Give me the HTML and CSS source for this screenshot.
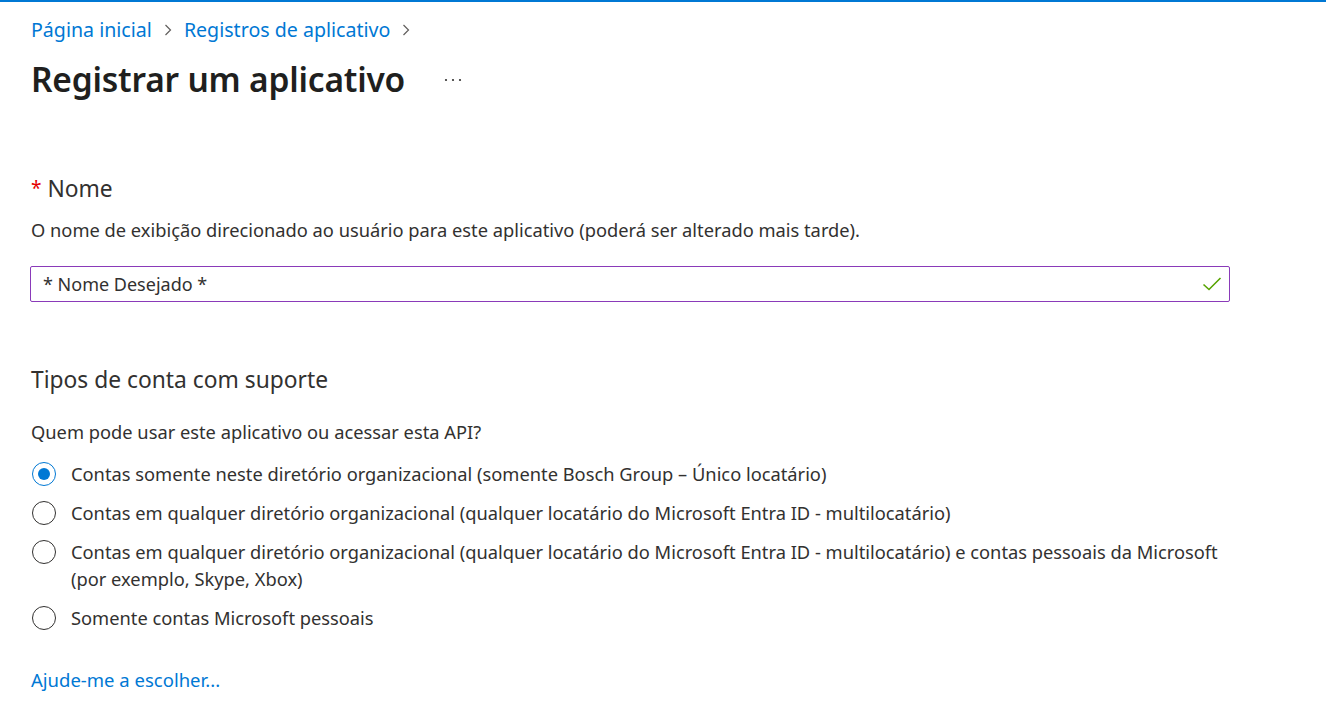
FILE: index.html
```html
<!DOCTYPE html>
<html lang="pt">
<head>
<meta charset="utf-8">
<link rel="stylesheet" href="styles.css">
</head>
<body>
<div class="topbar"></div>
<main class="page">
  <nav class="breadcrumb">
    <a class="crumb">Página inicial</a>
    <svg class="chev" width="10" height="16" viewBox="0 0 10 16"><path d="M2.5 3 L7.5 8 L2.5 13" fill="none" stroke="#605e5c" stroke-width="1.2"/></svg>
    <a class="crumb">Registros de aplicativo</a>
    <svg class="chev" width="10" height="16" viewBox="0 0 10 16"><path d="M2.5 3 L7.5 8 L2.5 13" fill="none" stroke="#605e5c" stroke-width="1.2"/></svg>
  </nav>
  <header class="title-row">
    <h1 class="title">Registrar um aplicativo</h1>
    <svg class="more" width="18" height="4" viewBox="0 0 18 4"><circle cx="2" cy="2" r="1.1" fill="#323130"/><circle cx="9" cy="2" r="1.1" fill="#323130"/><circle cx="16" cy="2" r="1.1" fill="#323130"/></svg>
  </header>

  <section class="section name-section">
    <h2 class="label"><span class="req">*</span> Nome</h2>
    <p class="desc">O nome de exibição direcionado ao usuário para este aplicativo (poderá ser alterado mais tarde).</p>
    <div class="input">
      <span class="input-text">* Nome Desejado *</span>
      <svg class="check" width="20" height="16" viewBox="0 0 20 16"><path d="M1.5 8.5 L7 13.5 L18.5 2" fill="none" stroke="#57a300" stroke-width="1.6"/></svg>
    </div>
  </section>

  <section class="section types-section">
    <h2 class="label">Tipos de conta com suporte</h2>
    <p class="question">Quem pode usar este aplicativo ou acessar esta API?</p>
    <div class="options">
      <div class="option">
        <span class="radio checked"></span>
        <span class="opt-text">Contas somente neste diretório organizacional (somente Bosch Group – Único locatário)</span>
      </div>
      <div class="option">
        <span class="radio"></span>
        <span class="opt-text">Contas em qualquer diretório organizacional (qualquer locatário do Microsoft Entra ID - multilocatário)</span>
      </div>
      <div class="option">
        <span class="radio"></span>
        <span class="opt-text">Contas em qualquer diretório organizacional (qualquer locatário do Microsoft Entra ID - multilocatário) e contas pessoais da Microsoft<br>(por exemplo, Skype, Xbox)</span>
      </div>
      <div class="option">
        <span class="radio"></span>
        <span class="opt-text">Somente contas Microsoft pessoais</span>
      </div>
    </div>
    <a class="help">Ajude-me a escolher...</a>
  </section>
</main>
</body>
</html>
```

FILE: styles.css
```css
* { box-sizing: border-box; }
html, body { margin: 0; padding: 0; background: #fff; }
body {
  font-family: "Noto Sans", "Open Sans", sans-serif;
  color: #323130;
  font-size: 18.3px;
}
.topbar { height: 2px; background: #0078d4; }
.page { padding: 0 0 0 31px; }

.breadcrumb {
  display: flex;
  align-items: center;
  gap: 11px;
  height: 28px;
  margin-top: 14px;
}
.crumb { color: #0078d4; font-size: 19.6px; line-height: 28px; text-decoration: none; }

.title-row {
  display: flex;
  align-items: center;
  margin-top: 13px;
  height: 44px;
}
.title {
  margin: 0;
  font-size: 33.5px;
  line-height: 44px;
  font-weight: 600;
  color: #201f1e;
  letter-spacing: -0.2px;
}
.more { margin-left: 39px; margin-top: 2px; }

.name-section { margin-top: 73px; }
.label {
  margin: 0;
  font-size: 22.8px;
  font-weight: 400;
  line-height: 28px;
  color: #323130;
}
.req { color: #e50000; font-size: 19px; vertical-align: 2px; }
.desc {
  margin: 15px 0 0;
  font-size: 18.3px;
  line-height: 24px;
}
.input {
  margin-top: 24px;
  width: 1200px;
  margin-left: -1px;
  height: 36px;
  border: 1px solid #8a3ab9;
  border-radius: 2px;
  display: flex;
  align-items: center;
  justify-content: space-between;
  padding: 0 7px 0 12px;
}
.input-text { font-size: 18px; line-height: 24px; color: #323130; }

.types-section { margin-top: 64px; }
.question { margin: 26px 0 0; font-size: 18.3px; line-height: 24px; }
.options { display: flex; flex-direction: column; gap: 12px; margin-top: 16px; }
.option { display: flex; align-items: flex-start; gap: 15px; margin-left: 1px; }
.radio {
  width: 24px;
  height: 24px;
  border-radius: 50%;
  border: 1.5px solid #323130;
  flex: none;
  position: relative;
  margin-top: 1.5px;
}
.radio.checked { border-color: #0078d4; }
.radio.checked::after {
  content: "";
  position: absolute;
  left: 50%; top: 50%;
  width: 12px; height: 12px;
  margin: -6px 0 0 -6px;
  border-radius: 50%;
  background: #0078d4;
}
.opt-text { font-size: 18.3px; line-height: 27px; }
.help {
  display: block;
  margin-top: 37px;
  color: #0078d4;
  font-size: 18.5px;
  line-height: 24px;
}
```
